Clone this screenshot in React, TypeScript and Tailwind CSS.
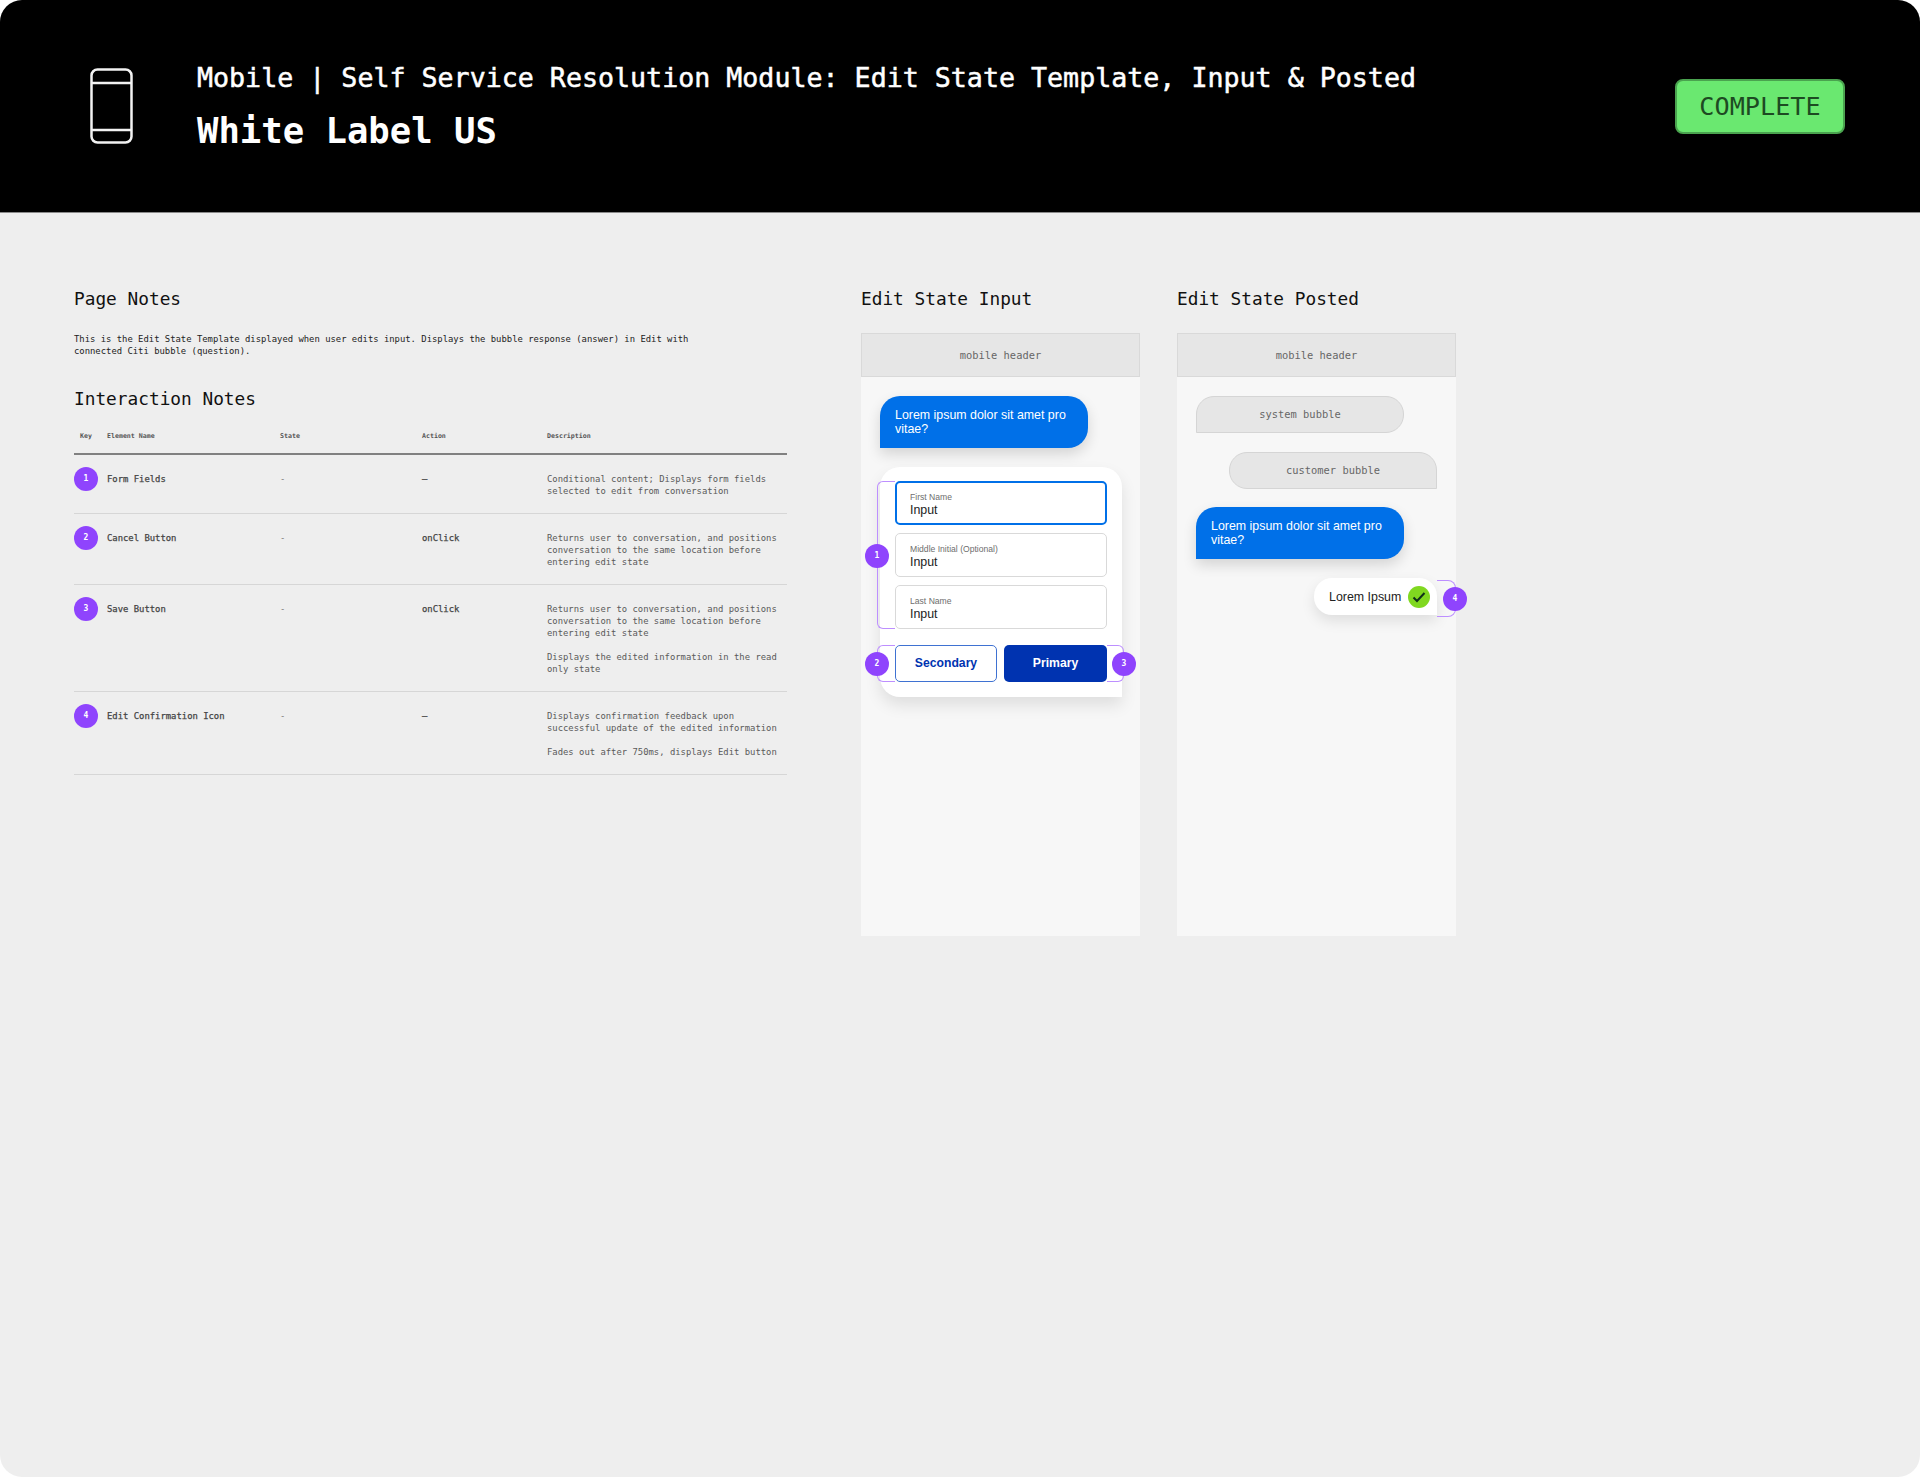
import React from "react";

const MONO = "font-['DejaVu_Sans_Mono','Liberation_Mono',monospace]";
const SANS = "font-['Liberation_Sans',Arial,sans-serif]";

function Pin({ n, className }: { n: number; className: string }) {
  return (
    <div className={`flex h-[24px] w-[24px] items-center justify-center rounded-full bg-[#8f44fd] text-[8px] font-bold text-white ${MONO} ${className}`}>
      {n}
    </div>
  );
}

const rows = [
  { n: 1, name: "Form Fields", state: "-", action: "–", desc: ["Conditional content; Displays form fields selected to edit from conversation"] },
  { n: 2, name: "Cancel Button", state: "-", action: "onClick", desc: ["Returns user to conversation, and positions conversation to the same location before entering edit state"] },
  { n: 3, name: "Save Button", state: "-", action: "onClick", desc: ["Returns user to conversation, and positions conversation to the same location before entering edit state", "Displays the edited information in the read only state"] },
  { n: 4, name: "Edit Confirmation Icon", state: "-", action: "–", desc: ["Displays confirmation feedback upon successful update of the edited information", "Fades out after 750ms, displays Edit button"] },
];

function BlueBubble() {
  return (
    <div className={`flex h-[52px] w-[208px] items-center rounded-[20px] rounded-bl-none bg-[#0070e8] px-[15px] text-[12.4px] leading-[14.5px] text-white shadow-[0_6px_14px_rgba(0,0,0,0.14)] ${SANS}`}>
      Lorem ipsum dolor sit amet pro vitae?
    </div>
  );
}

function Field({ label, active }: { label: string; active?: boolean }) {
  return (
    <div className={`flex h-[44px] flex-col justify-center rounded-[5px] bg-white pt-[2px] ${active ? "border-2 border-[#0070e8] pl-[13px]" : "border border-[#d9d9d9] pl-[14px]"}`}>
      <div className="text-[8.6px] leading-[12px] text-[#6e6e6e]">{label}</div>
      <div className="text-[12.4px] leading-[15px] text-[#222]">Input</div>
    </div>
  );
}

function PhoneHeader() {
  return (
    <div className={`flex h-[44px] items-center justify-center border border-[#d9d9d9] bg-[#e6e6e6] pt-[2px] text-[10.4px] text-[#666] ${MONO}`}>
      mobile header
    </div>
  );
}

export default function App() {
  return (
    <div className="h-[1477px] w-[1920px] bg-white">
      <div className="flex h-[1477px] flex-col overflow-hidden rounded-[22px] bg-[#eeeeee]">
        <header className="flex h-[213px] items-center border-b border-[#8a8a8a] bg-black pl-[90px] pr-[75px]">
          <svg width="43" height="76" viewBox="0 0 43 76" fill="none" stroke="#f2f2f2" strokeWidth="2.5">
            <rect x="1.5" y="1.5" width="40" height="73" rx="6" />
            <path d="M1.5 15H41.5M1.5 62H41.5" />
          </svg>
          <div className={`ml-[64px] self-start pt-[58px] text-white ${MONO}`}>
            <div className="text-[26.65px] leading-[40px] [-webkit-text-stroke:0.5px_white]">Mobile | Self Service Resolution Module: Edit State Template, Input &amp; Posted</div>
            <div className="mt-[13px] text-[35.6px] font-bold leading-[40px]">White Label US</div>
          </div>
          <div className={`ml-auto flex h-[55px] w-[170px] items-center justify-center rounded-[8px] border-2 border-[#4aa34f] bg-[#6ae870] pt-[2px] text-[25.2px] text-[#1d4a22] ${MONO}`}>
            COMPLETE
          </div>
        </header>

        <main className={`flex pl-[74px] pt-[76px] ${MONO}`}>
          <section className="w-[713px]">
            <h2 className="text-[17.8px] leading-[20px] text-[#111]">Page Notes</h2>
            <p className="mt-[24px] w-[640px] text-[8.9px] leading-[12px] text-[#222]">
              This is the Edit State Template displayed when user edits input. Displays the bubble response (answer) in Edit with connected Citi bubble (question).
            </p>
            <h2 className="mt-[32px] text-[17.8px] leading-[20px] text-[#111]">Interaction Notes</h2>
            <div className="mt-[22px] flex h-[24px] border-b-2 border-[#808080] text-[6.6px] font-bold leading-[10px] text-[#555]">
              <div className="w-[33px] pl-[6px]">Key</div>
              <div className="w-[173px]">Element Name</div>
              <div className="w-[142px]">State</div>
              <div className="w-[125px]">Action</div>
              <div>Description</div>
            </div>
            {rows.map((r) => (
              <div key={r.n} className="flex border-b border-[#d6d6d6] pb-[16px] pt-[12px] text-[8.9px] leading-[12px]">
                <div className="w-[33px]">
                  <Pin n={r.n} className="" />
                </div>
                <div className="w-[173px] pt-[6px] text-[#444] [-webkit-text-stroke:0.25px_#444]">{r.name}</div>
                <div className="w-[142px] pt-[6px] text-[#777]">{r.state}</div>
                <div className="w-[125px] pt-[6px] text-[#444] [-webkit-text-stroke:0.25px_#444]">{r.action}</div>
                <div className="w-[239px] pt-[6px] text-[#5a5a5a]">
                  {r.desc.map((d, i) => (
                    <p key={i} className={i ? "mt-[12px]" : ""}>{d}</p>
                  ))}
                </div>
              </div>
            ))}
          </section>

          <section className="ml-[74px] w-[279px]">
            <h2 className="text-[17.8px] leading-[20px] text-[#111]">Edit State Input</h2>
            <div className="mt-[24px]">
              <PhoneHeader />
              <div className={`h-[559px] bg-[#f7f7f7] px-[19px] pt-[19px] ${SANS}`}>
                <BlueBubble />
                <div className="relative mt-[19px] w-[242px] rounded-[20px] rounded-br-none bg-white px-[15px] pb-[15px] pt-[14px] shadow-[0_8px_16px_rgba(0,0,0,0.1)]">
                  <div className="flex flex-col gap-[8px]">
                    <Field label="First Name" active />
                    <Field label="Middle Initial (Optional)" />
                    <Field label="Last Name" />
                  </div>
                  <div className="mt-[16px] flex gap-[7px]">
                    <div className="flex h-[37px] w-[102px] items-center justify-center rounded-[5px] border border-[#3f72d2] bg-white text-[12.2px] font-bold text-[#0033b0]">Secondary</div>
                    <div className="flex h-[37px] w-[103px] items-center justify-center rounded-[5px] bg-[#0033b0] text-[12.2px] font-bold text-white">Primary</div>
                  </div>
                  <div className="absolute left-[-3px] top-[14px] h-[148px] w-[18px] rounded-l-[6px] border-y-[1.5px] border-l-[1.5px] border-[#bd8fff]" />
                  <div className="absolute left-[-3px] top-[178px] h-[37px] w-[18px] rounded-l-[6px] border-y-[1.5px] border-l-[1.5px] border-[#bd8fff]" />
                  <div className="absolute left-[227px] top-[178px] h-[37px] w-[17px] rounded-r-[6px] border-y-[1.5px] border-r-[1.5px] border-[#bd8fff]" />
                  <Pin n={1} className="absolute left-[-15px] top-[77px]" />
                  <Pin n={2} className="absolute left-[-15px] top-[185px]" />
                  <Pin n={3} className="absolute left-[232px] top-[185px]" />
                </div>
              </div>
            </div>
          </section>

          <section className="ml-[37px] w-[279px]">
            <h2 className="text-[17.8px] leading-[20px] text-[#111]">Edit State Posted</h2>
            <div className="mt-[24px]">
              <PhoneHeader />
              <div className="h-[559px] bg-[#f7f7f7] px-[19px] pt-[19px]">
                <div className="flex h-[37px] w-[208px] items-center justify-center rounded-[18px] rounded-bl-none border border-[#d5d5d5] bg-[#e6e6e6] text-[10.4px] text-[#666]">system bubble</div>
                <div className="ml-[33px] mt-[19px] flex h-[37px] w-[208px] items-center justify-center rounded-[18px] rounded-br-none border border-[#d5d5d5] bg-[#e6e6e6] text-[10.4px] text-[#666]">customer bubble</div>
                <div className="mt-[18px]">
                  <BlueBubble />
                </div>
                <div className={`relative ml-[118px] mt-[19px] flex h-[37px] w-[123px] items-center whitespace-nowrap rounded-[18px] rounded-br-none bg-white pl-[15px] pt-[1px] text-[12.4px] text-[#222] shadow-[0_6px_14px_rgba(0,0,0,0.1)] ${SANS}`}>
                  Lorem Ipsum
                  <div className="ml-auto mr-[7px] flex h-[22px] w-[22px] items-center justify-center rounded-full bg-[#80d820]">
                    <svg width="14" height="12" viewBox="0 0 14 12" fill="none" stroke="#10301a" strokeWidth="2">
                      <path d="M1.5 6.5L5 10L12.5 2" />
                    </svg>
                  </div>
                  <div className="absolute left-[123px] top-[2px] h-[37px] w-[19px] rounded-r-[8px] border-y-[1.5px] border-r-[1.5px] border-[#bd8fff]" />
                  <Pin n={4} className="absolute left-[129px] top-[9px]" />
                </div>
              </div>
            </div>
          </section>
        </main>
      </div>
    </div>
  );
}
